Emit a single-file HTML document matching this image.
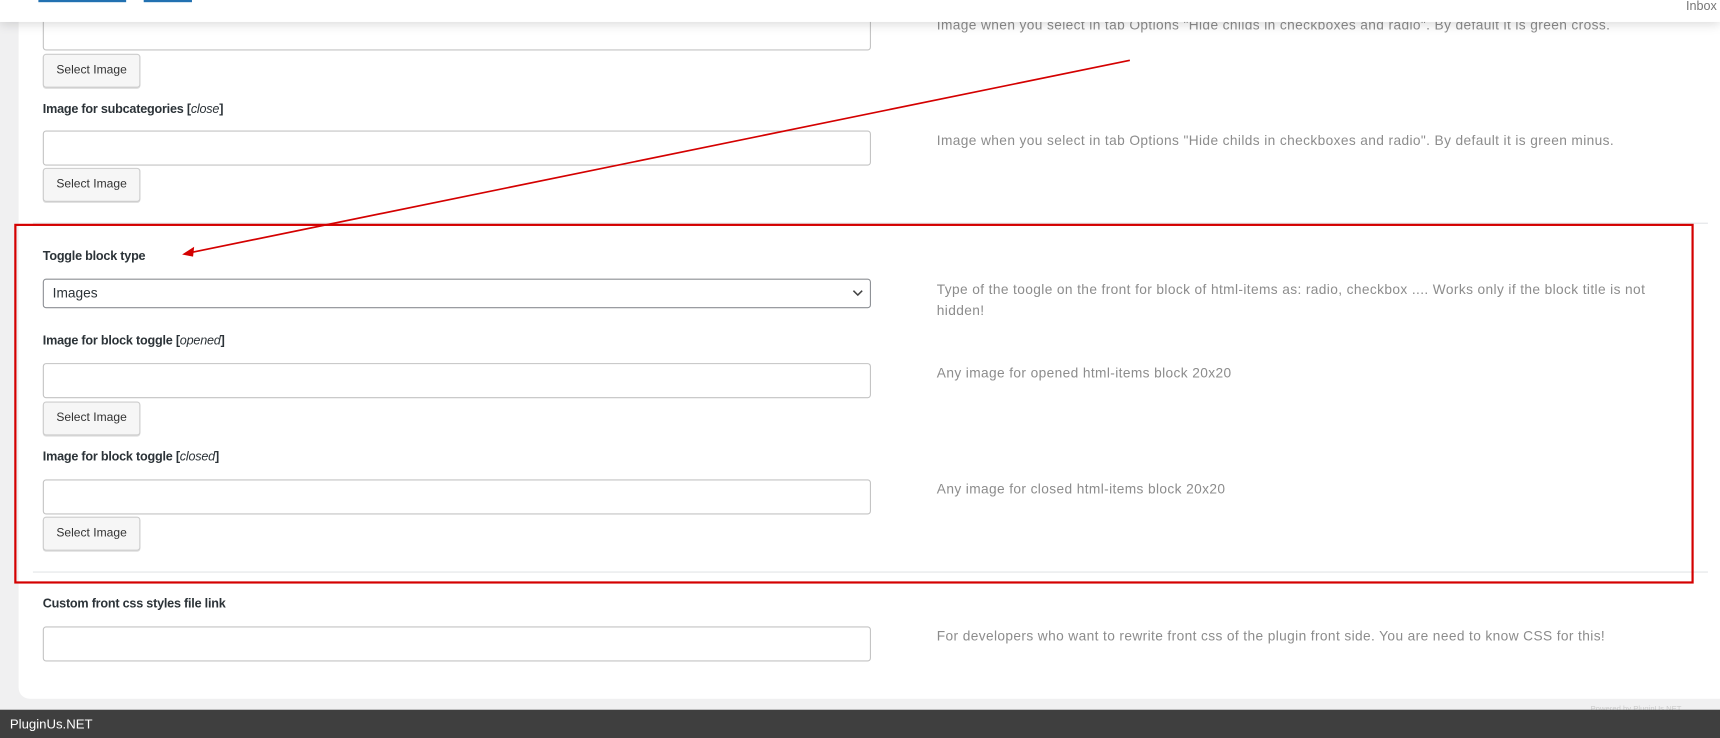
<!DOCTYPE html>
<html><head><meta charset="utf-8"><style>
html,body{margin:0;padding:0;width:1720px;height:738px;overflow:hidden;background:#f0f0f1;}
#w{position:absolute;left:0;top:0;width:1568px;height:673px;transform:scale(1.09694);transform-origin:0 0;font-family:"Liberation Sans",sans-serif;}
.a{position:absolute;}
.card{left:17px;top:0;width:1551px;height:637px;background:#fff;border-bottom-left-radius:10px;}
.inp{position:absolute;left:39px;width:753px;height:30px;border:1px solid #c3c3c3;border-radius:3px;background:#fff;}
.btn{position:absolute;left:39px;width:87px;height:29px;border:1px solid #ccc;border-radius:3px;background:#f6f6f6;font-size:11px;color:#333;line-height:29px;text-align:center;box-shadow:0 1px 0 #ddd;}
.lbl{position:absolute;left:39px;font-size:11.5px;font-weight:bold;color:#2c3338;letter-spacing:-0.2px;}
.lbl i{font-weight:normal;}
.d{position:absolute;left:854px;font-size:12.5px;color:#8c8c8c;line-height:19px;width:660px;letter-spacing:0.35px;}
.sep{position:absolute;left:30px;width:1527px;height:1px;background:#e2e4e7;}
</style></head><body><div id="w">
<div class="a card"></div>
<div class="inp" style="top:14px"></div>
<div class="btn" style="top:49px">Select Image</div>
<div class="d" style="top:14px">Image when you select in tab Options "Hide childs in checkboxes and radio". By default it is green cross.</div>
<div class="lbl" style="top:94px">Image for subcategories [<i>close</i>]</div>
<div class="inp" style="top:119px"></div>
<div class="btn" style="top:153px">Select Image</div>
<div class="d" style="top:119px">Image when you select in tab Options "Hide childs in checkboxes and radio". By default it is green minus.</div>
<div class="sep" style="top:203px"></div>
<div class="lbl" style="top:228px">Toggle block type</div>
<div class="inp" style="top:254px;height:25px;border-color:#8c8f94;font-size:12.5px;color:#2c3338;line-height:25px;padding-left:8px;width:745px">Images
<svg style="position:absolute;right:6px;top:8px" width="10" height="8" viewBox="0 0 10 8"><path d="M1 2l4 4 4-4" fill="none" stroke="#444" stroke-width="1.4"/></svg></div>
<div class="d" style="top:255px">Type of the toogle on the front for block of html-items as: radio, checkbox .... Works only if the block title is not hidden!</div>
<div class="lbl" style="top:305px">Image for block toggle [<i>opened</i>]</div>
<div class="inp" style="top:331px"></div>
<div class="btn" style="top:366px">Select Image</div>
<div class="d" style="top:331px">Any image for opened html-items block 20x20</div>
<div class="lbl" style="top:411px">Image for block toggle [<i>closed</i>]</div>
<div class="inp" style="top:437px"></div>
<div class="btn" style="top:471px">Select Image</div>
<div class="d" style="top:437px">Any image for closed html-items block 20x20</div>
<div class="sep" style="top:521px"></div>
<div class="a" style="left:13px;top:204px;width:1527px;height:324px;border:2px solid #d40000;"></div>
<div class="lbl" style="top:545px">Custom front css styles file link</div>
<div class="inp" style="top:571px"></div>
<div class="d" style="top:571px;width:700px">For developers who want to rewrite front css of the plugin front side. You are need to know CSS for this!</div>
<div class="a" style="left:0;top:0;width:1568px;height:20px;background:#fff;box-shadow:0 2px 10px rgba(0,0,0,0.15);"></div>
<div class="a" style="left:35px;top:0;width:80px;height:2px;background:#2271b1"></div>
<div class="a" style="left:131px;top:0;width:44px;height:2px;background:#2271b1"></div>
<div class="a" style="left:1537px;top:0;font-size:11.5px;color:#777">Inbox</div>
<svg class="a" style="left:0;top:0" width="1568" height="673"><line x1="1030" y1="55" x2="175" y2="230" stroke="#d40000" stroke-width="1.5"/><path d="M166 232 L177 225 L176 234 Z" fill="#d40000"/></svg>
<div class="a" style="left:1450px;top:643px;font-size:7px;color:#ccc">Powered by PluginUs.NET</div>
<div class="a" style="left:0;top:647px;width:1568px;height:26px;background:#3f3f3f;color:#fff;font-size:12px;line-height:26px;padding-left:9px;box-sizing:border-box">PluginUs.NET</div>
</div></body></html>
